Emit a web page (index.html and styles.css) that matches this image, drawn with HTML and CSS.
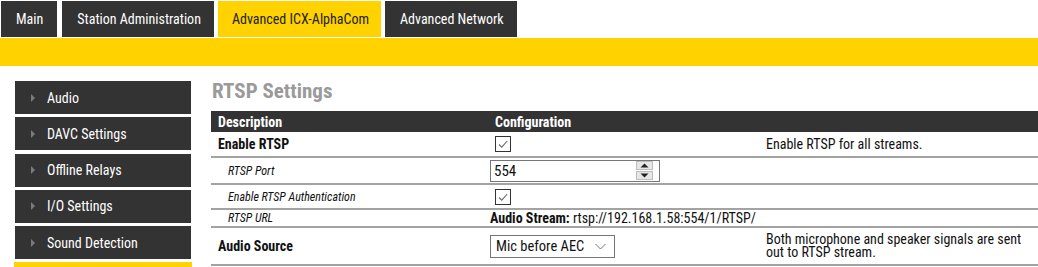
FILE: index.html
```html
<!DOCTYPE html>
<html lang="en">
  <head>
    <meta charset="UTF-8" />
    <title>RTSP Settings</title>
    <link rel="stylesheet" href="styles.css">
  </head>

  <body>
    <div class="tabs">
      <div class="tab">Main</div>
      <div class="tab">Station Administration</div>
      <div class="tab active">Advanced ICX-AlphaCom</div>
      <div class="tab">Advanced Network</div>
    </div>
    <div class="subbar"></div>

    <div class="page">
      <div class="sidebar">
        <div class="side-item"><span class="arrow"></span>Audio</div>
        <div class="side-item"><span class="arrow"></span>DAVC Settings</div>
        <div class="side-item"><span class="arrow"></span>Offline Relays</div>
        <div class="side-item"><span class="arrow"></span>I/O Settings</div>
        <div class="side-item"><span class="arrow"></span>Sound Detection</div>
        <div class="side-item current"></div>
      </div>

      <div class="content">
        <h2>RTSP Settings</h2>
        <table class="settings">
          <tr class="head">
            <th class="col-desc">Description</th>
            <th class="col-conf">Configuration</th>
            <th></th>
          </tr>
          <tr class="r-enable">
            <td class="main-label">Enable RTSP</td>
            <td class="conf"><span class="check"><svg width="12" height="12" viewBox="0 0 12 12"><path d="M2 6.5 L4.8 9.2 L10.2 3" fill="none" stroke="#6b6b6b" stroke-width="1.1"/></svg></span></td>
            <td class="help">Enable RTSP for all streams.</td>
          </tr>
          <tr class="r-port">
            <td class="sub-label">RTSP Port</td>
            <td class="conf">
              <div class="number">
                <span class="value">554</span>
                <span class="spin">
                  <span class="spin-btn"><svg width="9" height="5" viewBox="0 0 9 5"><path d="M0.5 4.5 L4.5 0.5 L8.5 4.5 Z" fill="#222"/></svg></span>
                  <span class="spin-btn"><svg width="9" height="5" viewBox="0 0 9 5"><path d="M0.5 0.5 L4.5 4.5 L8.5 0.5 Z" fill="#222"/></svg></span>
                </span>
              </div>
            </td>
            <td></td>
          </tr>
          <tr class="r-auth">
            <td class="sub-label">Enable RTSP Authentication</td>
            <td class="conf"><span class="check"><svg width="12" height="12" viewBox="0 0 12 12"><path d="M2 6.5 L4.8 9.2 L10.2 3" fill="none" stroke="#6b6b6b" stroke-width="1.1"/></svg></span></td>
            <td></td>
          </tr>
          <tr class="r-url">
            <td class="sub-label">RTSP URL</td>
            <td class="conf url" colspan="2"><b>Audio Stream:</b> rtsp://192.168.1.58:554/1/RTSP/</td>
          </tr>
          <tr class="r-source">
            <td class="main-label">Audio Source</td>
            <td class="conf">
              <div class="select">
                Mic before AEC
                <svg width="11" height="7" viewBox="0 0 11 7"><path d="M0.5 1 L5.5 6 L10.5 1" fill="none" stroke="#777" stroke-width="1"/></svg>
              </div>
            </td>
            <td class="help">Both microphone and speaker signals are sent out to RTSP stream.</td>
          </tr>
        </table>
      </div>
    </div>
  </body>
</html>
```
FILE: styles.css
```css
body {
  margin: 0;
  font-family: "Roboto Condensed", Roboto, sans-serif;
  font-size: 14px;
  color: #111;
  background-color: #fff;
  overflow: hidden;
}

.tabs {
  display: flex;
  gap: 4px;
  padding: 1px 0 0 1px;
}

.tab {
  height: 36px;
  line-height: 36px;
  padding: 0 13px 0 15px;
  background-color: #333333;
  color: #fff;
}

.tab:first-child {
  padding-right: 14px;
  margin-right: 1px;
}

.tab.active {
  padding: 0 12px 0 14px;
  background-color: #ffd200;
  color: #222;
}

.subbar {
  height: 28px;
  margin-top: 1px;
  background-color: #ffd200;
}

.page {
  display: flex;
  padding-top: 15px;
}

.sidebar {
  width: 176px;
  margin-left: 15px;
  flex-shrink: 0;
}

.side-item {
  display: flex;
  align-items: center;
  height: 33px;
  margin-bottom: 3.25px;
  padding-left: 16px;
  background-color: #333333;
  color: #fff;
}

.side-item.current {
  margin: 0 -1px;
  background-color: #ffd200;
}

.arrow {
  width: 0;
  height: 0;
  margin-right: 12px;
  border-top: 4px solid transparent;
  border-bottom: 4px solid transparent;
  border-left: 4px solid #7a7a7a;
}

.content {
  flex: 1;
  margin-left: 20px;
}

h2 {
  margin: 0 0 10px 1px;
  height: 20px;
  line-height: 20px;
  font-size: 21px;
  font-weight: 700;
  color: #9a9a9a;
}

.settings {
  width: 827px;
  border-collapse: collapse;
  table-layout: fixed;
}

.settings td,
.settings th {
  padding: 0;
  vertical-align: middle;
  text-align: left;
}

.settings tr {
  border-bottom: 2px solid #a3a3a3;
}

.settings tr.head {
  border-bottom: none;
  height: 21px;
  background-color: #333333;
  color: #fff;
}

.settings th {
  font-weight: 700;
  padding-left: 7px;
}

.col-desc {
  width: 270px;
}

.col-conf {
  width: 267px;
}

.r-enable { height: 25px; }
.r-port { height: 27px; }
.r-auth { height: 25px; }
.r-url { height: 18px; }
.r-source { height: 38px; }

.main-label {
  padding-left: 7px !important;
  font-weight: 700;
}

.sub-label {
  padding-left: 17px !important;
  font-size: 12px;
  font-style: italic;
}

.conf {
  padding-left: 2px !important;
}

.help {
  padding: 0 4px !important;
  line-height: 13px;
}

.check {
  display: flex;
  align-items: center;
  justify-content: center;
  width: 14px;
  height: 14px;
  margin-left: 5px;
  border: 1px solid #333;
  background-color: #fff;
}

.number {
  display: flex;
  align-items: center;
  justify-content: space-between;
  width: 168px;
  height: 20px;
  border: 1px solid #767676;
  font-size: 15px;
}

.number .value {
  padding-left: 3px;
}

.spin {
  display: flex;
  flex-direction: column;
  gap: 1px;
  margin-right: 6px;
}

.spin-btn {
  display: flex;
  align-items: center;
  justify-content: center;
  width: 15px;
  height: 7px;
  background-color: #e6e6e6;
  border: 1px solid #bdbdbd;
}

.url b {
  font-weight: 700;
}

.select {
  display: flex;
  align-items: center;
  justify-content: space-between;
  width: 110px;
  height: 21px;
  padding: 0 8px 0 5px;
  border: 1px solid #767676;
  font-size: 14.5px;
}
```
